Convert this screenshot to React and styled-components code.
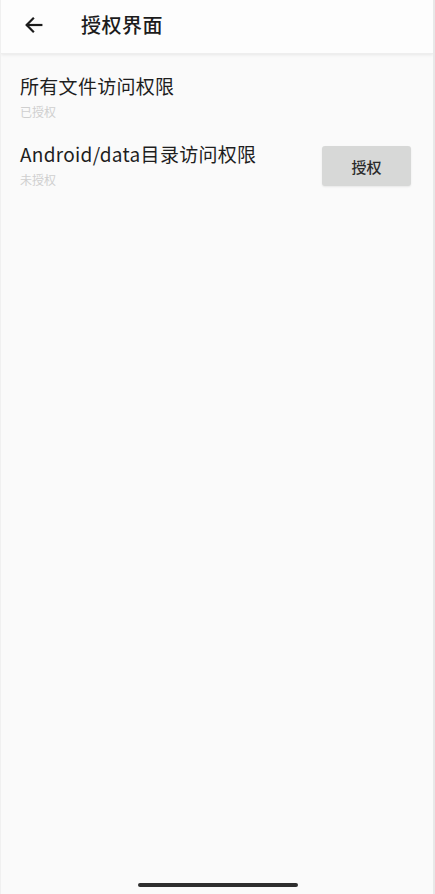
import React from "react";
import styled, { createGlobalStyle } from "styled-components";

const Global = createGlobalStyle`
  html, body { margin: 0; padding: 0; background: #fafafa; }
  body { font-family: "Noto Sans CJK SC", "Noto Sans", sans-serif; }
  * { box-sizing: border-box; }
`;

const Screen = styled.div`
  width: 435px;
  height: 894px;
  display: flex;
  flex-direction: column;
  background: #fafafa;
  border-left: 1px solid #f0f0f0;
  border-right: 2px solid #e8e8e8;
  position: relative;
  overflow: hidden;
`;

const Header = styled.header`
  height: 54px;
  flex: none;
  display: flex;
  align-items: center;
  padding: 0 0 4px 21px;
  background: #fdfdfd;
  box-shadow: 0 1px 3px rgba(0, 0, 0, 0.08);
  border-bottom: 1px solid #eeeeee;
`;

const BackButton = styled.button`
  width: 24px;
  height: 24px;
  padding: 0;
  border: none;
  background: transparent;
  display: flex;
  align-items: center;
  justify-content: center;
`;

const Title = styled.h1`
  margin: 0 0 0 35px;
  font-size: 20px;
  font-weight: 500;
  color: #1c1c1c;
  line-height: 26px;
  letter-spacing: 0.5px;
`;

const List = styled.div`
  padding-top: 9px;
  display: flex;
  flex-direction: column;
`;

const Row = styled.div`
  display: flex;
  align-items: center;
  padding: 10px 22px 11px 19px;
`;

const Texts = styled.div`
  flex: 1;
  display: flex;
  flex-direction: column;
  gap: 5px;
`;

const ItemTitle = styled.div`
  font-size: 19px;
  line-height: 26px;
  color: #1e1e1e;
  letter-spacing: 0.3px;
`;

const ItemSub = styled.div`
  font-size: 12px;
  line-height: 16px;
  color: #cfcfcf;
`;

const GrantButton = styled.button`
  width: 89px;
  height: 40px;
  margin-top: 3px;
  border: none;
  border-radius: 3px;
  background: #d7d8d7;
  box-shadow: 0 1px 2px rgba(0, 0, 0, 0.08);
  font-family: inherit;
  font-size: 15px;
  font-weight: 500;
  color: #2a2a2a;
`;

const HomeBar = styled.div`
  position: absolute;
  left: 137px;
  bottom: 7px;
  width: 160px;
  height: 4px;
  border-radius: 2px;
  background: #2e2e2e;
`;

const items = [
  { title: "所有文件访问权限", sub: "已授权", granted: true },
  { title: "Android/data目录访问权限", sub: "未授权", granted: false },
];

export default function App() {
  return (
    <>
      <Global />
      <Screen>
        <Header>
          <BackButton aria-label="返回">
            <svg width="22" height="22" viewBox="0 0 24 24" fill="none" stroke="#1c1c1c" strokeWidth="2.4" strokeLinecap="square">
              <path d="M20 12H4.5" />
              <path d="M11 5l-7 7 7 7" strokeLinejoin="miter" />
            </svg>
          </BackButton>
          <Title>授权界面</Title>
        </Header>
        <List>
          {items.map((it) => (
            <Row key={it.title}>
              <Texts>
                <ItemTitle>{it.title}</ItemTitle>
                <ItemSub>{it.sub}</ItemSub>
              </Texts>
              {!it.granted && <GrantButton>授权</GrantButton>}
            </Row>
          ))}
        </List>
        <HomeBar />
      </Screen>
    </>
  );
}
